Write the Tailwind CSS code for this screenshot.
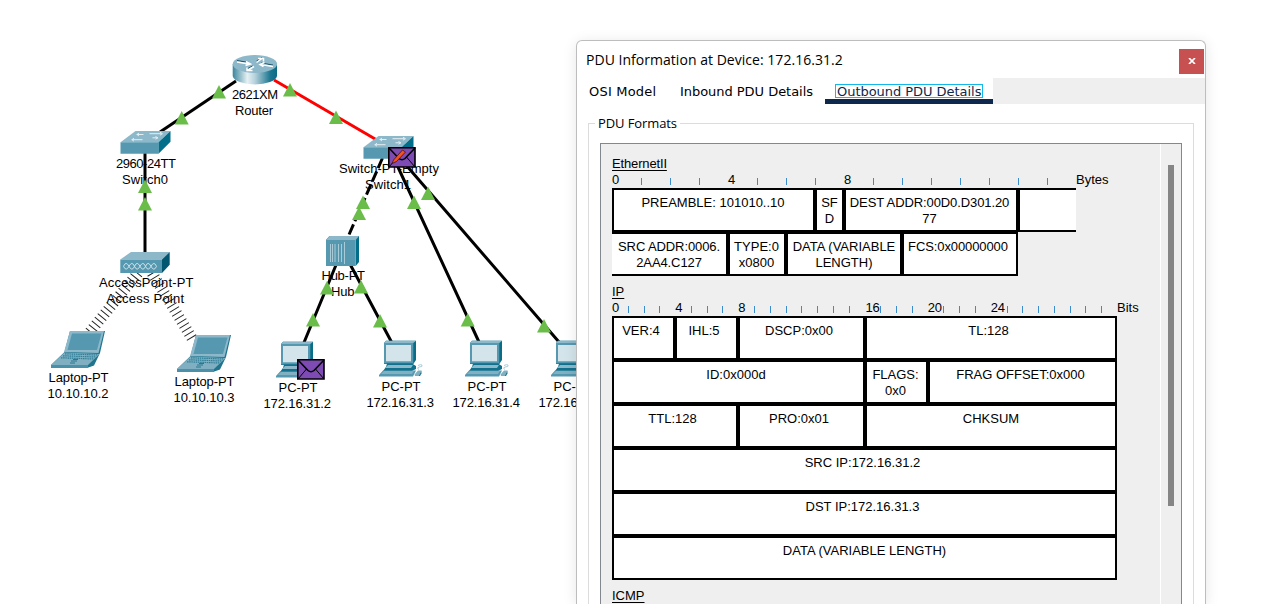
<!DOCTYPE html>
<html lang="en">
<head>
<meta charset="utf-8">
<title>PDU Information</title>
<script src="https://cdn.jsdelivr.net/npm/@tailwindcss/browser@4"></script>
</head>
<body class="relative h-[604px] w-[1264px] overflow-hidden bg-white text-black font-['Liberation_Sans',Arial,sans-serif]">

<!-- Network topology canvas -->
<svg class="absolute inset-0" width="1264" height="604" viewBox="0 0 1264 604">
  <defs>
    <linearGradient id="rt" x1="0" x2="1" y1="0" y2="0">
      <stop offset="0" stop-color="#3b869d"/><stop offset=".33" stop-color="#e6f0f3"/><stop offset=".5" stop-color="#b7d2dc"/><stop offset=".85" stop-color="#1c7690"/><stop offset="1" stop-color="#0c6a85"/>
    </linearGradient>
    <path id="tri" d="M0 0L7 13.6H-7Z" fill="#6bbd4a"/>
    <g id="sw">
      <path d="M15 0H50L38 11.3H0Z" fill="#8db8ca"/>
      <path d="M0 11.3H38V22.7H0Z" fill="#5598b0"/>
      <path d="M50 0V10.7L38 22.7V11.3Z" fill="#036e89"/>
      <g fill="none" stroke="#e4eff3" stroke-width="1">
        <path d="M23 3.5H16M29 2.7H41M22 8.7H11M32 6.8H37"/>
        <path d="M18.500 2L16.500 3.500L18.500 5M39.500 1.2L42 2.7L39.500 4.2M13.500 7.200L11.500 8.700L13.500 10.200M35 5.500L37.500 6.800L35 8.200"/>
      </g>
    </g>
    <g id="lap">
      <path d="M70 331L105 331L100 353L94 365.500L87 368H51V365L64.500 352Z" fill="#1f758e"/>
      <path d="M70 331H104L98.500 353L64 352Z" fill="#8db8ca"/>
      <path d="M72 333.500H101.500L97 350H67.500Z" fill="#5598b0"/>
      <path d="M64.500 352.500L99.500 354L88 365H51Z" fill="#7fafc1"/>
      <path d="M51 365H88V368H51Z" fill="#4b90a9"/>
      <path d="M65 353.800L98 355M63 355.800L96 357M61 357.800L94 359" stroke="#2f7f98" stroke-width="1.200" stroke-dasharray="1.500 .7"/>
      <path d="M71 361H77M70 363H75M73 359.500H78" stroke="#2b7690" stroke-width="1"/>
    </g>
    <g id="pc">
      <path d="M281 344L283 341.700H313V361L310.300 365H281Z" fill="#0a6d88"/>
      <path d="M281 344L283 341.700H313L310.300 344Z" fill="#8db8ca"/>
      <path d="M281 344H310.300V364.500H281Z" fill="#5598b0"/>
      <path d="M283 346H308V362.300H283Z" fill="#d3e4ea"/>
      <path d="M284 364.500H309L313 367V370L309 372H280L283 368Z" fill="#11708b"/>
      <path d="M285 366H310L308 369H282Z" fill="#8db8ca"/>
      <path d="M280 371.500H313L310 377.500H276V376Z" fill="#5598b0"/>
      <path d="M281 372H311L309 375H278Z" fill="#80b0c2"/>
    </g>
    <g id="mouse">
      <path d="M311.500 375.500L315 371.500H318.500L315.500 377H312Z" fill="#7fafc1"/>
      <path d="M315.500 377L318.500 371.500V374.500L317 377Z" fill="#27788f"/>
      <path d="M316 370.500Q313 369 316 368Q320 368 319 366Q318 365 315 366.500" fill="none" stroke="#a9cbd7" stroke-width="1"/>
    </g>
    <g id="env">
      <path d="M.8 .8H27V20H.8Z" fill="#7d4bb3" stroke="#000" stroke-width="1.600"/>
      <path d="M1 1L11 11.500Q14 14 17 11.500L27 1" fill="none" stroke="#000" stroke-width="1.600"/>
      <path d="M1 20L9.500 10M27 20L18.500 10" fill="none" stroke="#000" stroke-width="1"/>
    </g>
  </defs>

  <!-- Links -->
  <g fill="none" stroke="#000" stroke-width="3">
    <path d="M236 81L160 132"/>
    <path d="M274 80L376 139.500" stroke="#f00"/>
    <path d="M145 152V252"/>
    <path d="M382.500 158L348 237" stroke-dasharray="11 3.500"/>
    <path d="M397 165L479 342M406 165L559 342M336 265L304 342.500M350.500 265L391.500 342"/>
  </g>
  <path d="M138 273L89 333" fill="none" stroke="#222" stroke-width="11" stroke-dasharray="1 3.700"/>
  <path d="M152 273L193 340" fill="none" stroke="#222" stroke-width="11" stroke-dasharray="1 3.700"/>

  <!-- Router -->
  <path d="M232.700 64V76A22.200 9 0 0 0 277 76V64Z" fill="url(#rt)"/>
  <ellipse cx="254.900" cy="64" rx="22.200" ry="9" fill="#8db8ca"/>
  <path d="M237 60.500L249 62.500M256.500 61L262 57.500M273 65L261 63M252.500 66L247 69" fill="none" stroke="#1f5266" stroke-width="1"/>
  <g fill="none" stroke="#fff" stroke-width="1.500">
    <path d="M237 62L249 64M246 61.500L250.500 64L245.500 65.500M256.500 62.500L262 58.500M258 58.500H263.500V61.500M273 66.500L261 64.500M264.500 62.500L260 64.500L263.500 66.500M254 66.500L248 70M247 67.500V70.500H252.500"/>
  </g>

  <use href="#sw" x="120.500" y="131"/>
  <use href="#sw" x="363.500" y="136"/>

  <!-- Access point -->
  <path d="M131 252H169.700L162 259.500H120.300Z" fill="#8db8ca"/>
  <path d="M120.300 259.500H162V273H120.300Z" fill="#5598b0"/>
  <path d="M169.700 252V264.700L162 273V259.500Z" fill="#03566f"/>
  <path d="M123.500 266.300Q126 260.500 129 266.300T134.500 266.300T140 266.300T145.500 266.300T151 266.300T156.500 266.300M123.500 266.300Q126 272 129 266.300T134.500 266.300T140 266.300T145.500 266.300T151 266.300T156.500 266.300" fill="none" stroke="#d6e8ee" stroke-width=".9"/>

  <!-- Hub -->
  <path d="M326 240L329.500 236H359V262L355.700 266V240Z" fill="#036e89"/>
  <path d="M326 240L329.500 236H359L355.700 240Z" fill="#8db8ca"/>
  <path d="M326 240H355.700V266H326Z" fill="#5598b0"/>
  <path d="M330.500 244V262M332.500 244V262M335 244V262M338.500 244V262M341.500 244V262M344.500 242V264" stroke="#a9cbd7" stroke-width="1"/>

  <use href="#lap"/>
  <use href="#lap" x="126" y="4"/>
  <use href="#pc"/>
  <use href="#pc" x="103" y="-1"/><use href="#mouse" x="103" y="-1"/>
  <use href="#pc" x="189" y="-1"/><use href="#mouse" x="189" y="-1"/>
  <use href="#pc" x="275" y="-1"/>

  <!-- Device labels -->
  <g font-size="13" lengthAdjust="spacingAndGlyphs">
    <text x="232" y="99" textLength="46">2621XM</text>
    <text x="235" y="115" textLength="38">Router</text>
    <text x="116" y="168" textLength="60">2960-24TT</text>
    <text x="122" y="184" textLength="46">Switch0</text>
    <text x="339" y="173" textLength="100">Switch-PT-Empty</text>
    <text x="365" y="189" textLength="46">Switch1</text>
    <text x="321.500" y="280" textLength="43.500">Hub-PT</text>
    <text x="331" y="296" textLength="23.500">Hub</text>
    <text x="99" y="287" textLength="94.500">AccessPoint-PT</text>
    <text x="106.500" y="303" textLength="77.500">Access Point</text>
    <text x="48.500" y="382" textLength="60">Laptop-PT</text>
    <text x="47.500" y="398" textLength="61">10.10.10.2</text>
    <text x="174.500" y="386" textLength="60">Laptop-PT</text>
    <text x="173.500" y="402" textLength="61">10.10.10.3</text>
    <text x="278.500" y="392" textLength="39">PC-PT</text>
    <text x="263.500" y="408" textLength="67.500">172.16.31.2</text>
    <text x="381.500" y="391" textLength="39">PC-PT</text>
    <text x="366.500" y="407" textLength="67.500">172.16.31.3</text>
    <text x="467.500" y="391" textLength="39">PC-PT</text>
    <text x="452.500" y="407" textLength="67.500">172.16.31.4</text>
    <text x="553.500" y="391" textLength="39">PC-PT</text>
    <text x="538.500" y="407" textLength="67.500">172.16.31.5</text>
  </g>

  <!-- Link status markers -->
  <use href="#tri" x="219" y="85"/><use href="#tri" x="181.700" y="111"/>
  <use href="#tri" x="290" y="83"/><use href="#tri" x="336" y="110.500"/>
  <use href="#tri" x="145" y="179.500"/><use href="#tri" x="145" y="197"/>
  <use href="#tri" x="363" y="195.500"/><use href="#tri" x="359" y="206.500"/>
  <use href="#tri" x="414" y="195.500"/><use href="#tri" x="428" y="186.500"/>
  <use href="#tri" x="327" y="281"/><use href="#tri" x="361" y="280"/>
  <use href="#tri" x="313" y="313"/><use href="#tri" x="380" y="314"/>
  <use href="#tri" x="467.700" y="313"/><use href="#tri" x="544" y="319"/>

  <use href="#env" x="388" y="147"/>
  <path d="M392 163.500L393.500 160L402.500 150L405.500 152L396.500 161.500Z" fill="#f4511e" stroke="#4a1010" stroke-width=".8"/>
  <use href="#env" x="297" y="359"/>
</svg>

<!-- PDU dialog -->
<section class="absolute left-[576px] top-10 flex h-[564px] w-[630px] flex-col overflow-hidden rounded-t-md border border-b-0 border-[#bdbdbd] bg-white shadow-[0_2px_14px_rgba(0,0,0,0.10)]">
  <header class="flex h-[37px] shrink-0 items-start justify-between pl-[9px] pr-px">
    <h1 class="whitespace-nowrap pt-[9px] text-[14px] leading-5 tracking-[0.03px] font-['Open_Sans',sans-serif]">PDU Information at Device: 172.16.31.2</h1>
    <button class="mt-2 flex size-[25px] items-center justify-center bg-[#c75050]">
      <svg class="-mt-px" width="8" height="6" viewBox="0 0 8 6"><path d="M1 0L7 6M7 0L1 6" stroke="#fff" stroke-width="1.700"/></svg>
    </button>
  </header>
  <nav class="flex h-[26px] shrink-0 bg-[#efefef] text-[13px] leading-4 font-['DejaVu_Sans',sans-serif]">
    <div class="w-[92px] whitespace-nowrap bg-white pl-3 pt-[6px] tracking-[0.2px]">OSI Model</div>
    <div class="w-[156px] whitespace-nowrap bg-white pl-[11px] pt-[6px] tracking-[-0.04px]">Inbound PDU Details</div>
    <div class="w-[168px] whitespace-nowrap border-b-[5px] border-[#0d274d] bg-white pl-[10px] pt-[6px] tracking-[-0.04px] text-[#0d274d]">
      <span class="block h-[14px] w-[148px] border border-[#12b8ea] pl-px leading-[14px]">Outbound PDU Details</span>
    </div>
  </nav>

  <div class="flex grow flex-col px-[11px] pt-[10px]">
    <fieldset class="relative mt-[9px] grow border border-b-0 border-[#dcdcdc] px-[11px] pt-[19px]">
      <div class="absolute left-[6px] top-[-9px] whitespace-nowrap bg-white px-[3px] text-[13px] leading-4 tracking-[-0.1px] font-['Open_Sans',sans-serif]">PDU Formats</div>

      <div class="flex h-[461px] w-[582px] overflow-hidden border border-b-0 border-[#828790] bg-[#efefef] text-[13px] leading-4">
        <div class="w-[559px] shrink-0 pl-[11px] pt-3">
          <h2 class="tracking-[-0.15px] underline underline-offset-2">EthernetII</h2>
          <div class="flex h-4">
            <span class="w-[29px]">0</span>
            <span class="mt-[6px] h-[7px] w-[29px] border-l border-[#3c8ccc]"></span>
            <span class="mt-[6px] h-[7px] w-[29px] border-l border-[#3c8ccc]"></span>
            <span class="mt-[6px] h-[7px] w-[29px] border-l border-[#3c8ccc]"></span>
            <span class="w-[29px]">4</span>
            <span class="mt-[6px] h-[7px] w-[29px] border-l border-[#3c8ccc]"></span>
            <span class="mt-[6px] h-[7px] w-[29px] border-l border-[#3c8ccc]"></span>
            <span class="mt-[6px] h-[7px] w-[29px] border-l border-[#3c8ccc]"></span>
            <span class="w-[29px]">8</span>
            <span class="mt-[6px] h-[7px] w-[29px] border-l border-[#3c8ccc]"></span>
            <span class="mt-[6px] h-[7px] w-[29px] border-l border-[#3c8ccc]"></span>
            <span class="mt-[6px] h-[7px] w-[29px] border-l border-[#3c8ccc]"></span>
            <span class="mt-[6px] h-[7px] w-[29px] border-l border-[#3c8ccc]"></span>
            <span class="mt-[6px] h-[7px] w-[29px] border-l border-[#3c8ccc]"></span>
            <span class="mt-[6px] h-[7px] w-[29px] border-l border-[#3c8ccc]"></span>
            <span class="mt-[6px] h-[7px] w-[29px] border-l border-[#3c8ccc]"></span>
            <span>Bytes</span>
          </div>
          <div class="flex h-11 whitespace-nowrap text-center">
            <div class="w-[203px] border-2 bg-white pt-[5px] pr-px">PREAMBLE: 101010..10</div>
            <div class="w-[29px] border-2 bg-white pt-[5px]">SF<br>D</div>
            <div class="w-[174px] border-2 bg-white pt-[5px] pr-[3px] tracking-[-0.1px]">DEST ADDR:00D0.D301.20<br>77</div>
            <div class="w-[58px] border-2 border-r-0 bg-white"></div>
          </div>
          <div class="flex h-11 whitespace-nowrap text-center">
            <div class="w-[116px] border-2 border-l-0 bg-white pt-[5px] tracking-[-0.1px]">SRC ADDR:0006.<br>2AA4.C127</div>
            <div class="w-[58px] border-2 bg-white pt-[5px] pr-px">TYPE:0<br>x0800</div>
            <div class="w-[116px] border-2 bg-white pt-[5px]">DATA (VARIABLE<br>LENGTH)</div>
            <div class="w-[116px] border-2 bg-white pt-[5px] pr-1 tracking-[-0.1px]">FCS:0x00000000</div>
          </div>

          <h2 class="mt-2 underline underline-offset-2">IP</h2>
          <div class="flex">
            <div class="grid h-4 w-[505px] grid-cols-[repeat(32,minmax(0,1fr))] whitespace-nowrap">
              <span>0</span>
              <span class="mt-[6px] h-[7px] border-l border-[#3c8ccc]"></span>
              <span class="mt-[6px] h-[7px] border-l border-[#3c8ccc]"></span>
              <span class="mt-[6px] h-[7px] border-l border-[#3c8ccc]"></span>
              <span>4</span>
              <span class="mt-[6px] h-[7px] border-l border-[#3c8ccc]"></span>
              <span class="mt-[6px] h-[7px] border-l border-[#3c8ccc]"></span>
              <span class="mt-[6px] h-[7px] border-l border-[#3c8ccc]"></span>
              <span>8</span>
              <span class="mt-[6px] h-[7px] border-l border-[#3c8ccc]"></span>
              <span class="mt-[6px] h-[7px] border-l border-[#3c8ccc]"></span>
              <span class="mt-[6px] h-[7px] border-l border-[#3c8ccc]"></span>
              <span class="mt-[6px] h-[7px] border-l border-[#3c8ccc]"></span>
              <span class="mt-[6px] h-[7px] border-l border-[#3c8ccc]"></span>
              <span class="mt-[6px] h-[7px] border-l border-[#3c8ccc]"></span>
              <span class="mt-[6px] h-[7px] border-l border-[#3c8ccc]"></span>
              <span class="pl-px tracking-[-0.2px]">16</span>
              <span class="mt-[6px] h-[7px] border-l border-[#3c8ccc]"></span>
              <span class="mt-[6px] h-[7px] border-l border-[#3c8ccc]"></span>
              <span class="mt-[6px] h-[7px] border-l border-[#3c8ccc]"></span>
              <span class="tracking-[-0.2px]">20</span>
              <span class="mt-[6px] h-[7px] border-l border-[#3c8ccc]"></span>
              <span class="mt-[6px] h-[7px] border-l border-[#3c8ccc]"></span>
              <span class="mt-[6px] h-[7px] border-l border-[#3c8ccc]"></span>
              <span class="tracking-[-0.2px]">24</span>
              <span class="mt-[6px] h-[7px] border-l border-[#3c8ccc]"></span>
              <span class="mt-[6px] h-[7px] border-l border-[#3c8ccc]"></span>
              <span class="mt-[6px] h-[7px] border-l border-[#3c8ccc]"></span>
              <span class="mt-[6px] h-[7px] border-l border-[#3c8ccc]"></span>
              <span class="mt-[6px] h-[7px] border-l border-[#3c8ccc]"></span>
              <span class="mt-[6px] h-[7px] border-l border-[#3c8ccc]"></span>
              <span class="mt-[6px] h-[7px] border-l border-[#3c8ccc]"></span>
            </div>
            <span>Bits</span>
          </div>
          <div class="w-[505px] whitespace-nowrap text-center">
            <div class="flex h-11">
              <div class="w-[63px] border-2 bg-white pt-[5px] pr-[5px]">VER:4</div>
              <div class="w-[63px] border-2 bg-white pt-[5px] pr-[5px]">IHL:5</div>
              <div class="w-[127px] border-2 bg-white pt-[5px] pr-[5px]">DSCP:0x00</div>
              <div class="grow border-2 bg-white pt-[5px] pr-[5px]">TL:128</div>
            </div>
            <div class="flex h-11">
              <div class="w-[253px] border-2 bg-white pt-[5px] pr-[5px]">ID:0x000d</div>
              <div class="w-[63px] border-2 bg-white pt-[5px] pr-[2px]">FLAGS:<br>0x0</div>
              <div class="grow border-2 bg-white pt-[5px] pr-1">FRAG OFFSET:0x000</div>
            </div>
            <div class="flex h-11">
              <div class="w-[126px] border-2 bg-white pt-[5px] pr-[5px]">TTL:128</div>
              <div class="w-[127px] border-2 bg-white pt-[5px] pr-[5px]">PRO:0x01</div>
              <div class="grow border-2 bg-white pt-[5px]">CHKSUM</div>
            </div>
            <div class="h-11 border-2 bg-white pt-[5px] pr-1">SRC IP:172.16.31.2</div>
            <div class="h-11 border-2 bg-white pt-[5px] pr-1">DST IP:172.16.31.3</div>
            <div class="h-11 border-2 bg-white pt-[5px]">DATA (VARIABLE LENGTH)</div>
          </div>

          <h2 class="mt-2 h-4 underline underline-offset-2">ICMP</h2>
        </div>
        <div class="grow border-l border-white pl-[7px] pt-[21px]">
          <div class="h-[341px] w-[6px] bg-[#858585]"></div>
        </div>
      </div>
    </fieldset>
  </div>
</section>
</body>
</html>
